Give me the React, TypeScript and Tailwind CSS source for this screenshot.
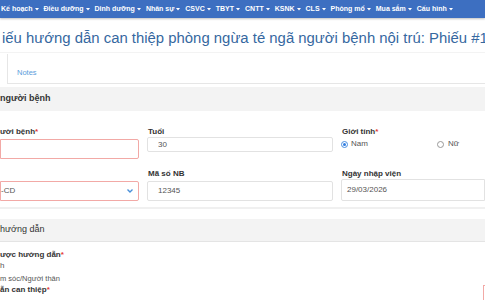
import React from "react";

const navItems = [
  "Kế hoạch",
  "Điều dưỡng",
  "Dinh dưỡng",
  "Nhân sự",
  "CSVC",
  "TBYT",
  "CNTT",
  "KSNK",
  "CLS",
  "Phòng mổ",
  "Mua sắm",
  "Cấu hình",
];

function Caret() {
  return (
    <svg width="4" height="3" viewBox="0 0 4 3" className="ml-[2px] mt-[1px]">
      <polygon points="0,0 4,0 2,2.5" fill="white" />
    </svg>
  );
}

function Star() {
  return <span className="text-[#e53935]">*</span>;
}

export default function App() {
  return (
    <div className="w-[485px] h-[300px] overflow-hidden bg-white font-['Liberation_Sans',Arial,sans-serif] text-[#333]">
      <nav className="relative z-10 h-[18px] bg-[#3d6fc1] shadow-[0_1px_2px_rgba(0,0,0,0.25)] flex items-center pl-[1px] gap-[5px] text-white font-bold text-[7px] whitespace-nowrap">
        {navItems.map((n) => (
          <div key={n} className="flex items-center">
            <span>{n}</span>
            <Caret />
          </div>
        ))}
      </nav>

      <h1 className="mt-[10px] h-[20px] leading-[20px] text-[14.9px] text-[#36689f] whitespace-nowrap pl-[2px]">
        iếu hướng dẫn can thiệp phòng ngừa té ngã người bệnh nội trú: Phiếu #1
      </h1>

      <div className="mt-[4px] border-t border-[#f3f3f3]" />

      <div className="flex items-end h-[31px] border-b border-[#e6e6e6]">
        <div className="w-[8px] h-[30px] border-r border-[#e6e6e6] bg-white -mb-px" />
        <div className="h-[21px] flex items-center pl-[9px] text-[7.5px] text-[#5b9ddb]">
          Notes
        </div>
      </div>

      {/* Card 1 */}
      <div className="mt-[3px] border-b-[2px] border-[#f0f0f0]">
        <div className="h-[24px] bg-[#f3f3f3] flex items-center text-[9px] font-bold text-[#333]">
          người bệnh
        </div>
        <div className="pt-[16px] pb-[6px] grid grid-cols-[139px_186px_1fr] gap-x-[8px] text-[8px]">
          {/* row 1 */}
          <div className="flex flex-col">
            <div className="h-[10px] leading-[10px] font-bold whitespace-nowrap">
              ười bệnh<Star />
            </div>
            <div className="mt-[2px] h-[20px] border border-[#f2a9a6] rounded-r-[2px]" />
          </div>
          <div className="flex flex-col">
            <div className="h-[10px] leading-[10px] font-bold pl-[1px]">Tuổi</div>
            <div className="h-[15px] border border-[#e2e2e2] rounded-[2px] flex items-center pl-[10px] text-[#555]">
              30
            </div>
          </div>
          <div className="flex flex-col">
            <div className="h-[10px] leading-[10px] font-bold pl-[1px] whitespace-nowrap">
              Giới tính<Star />
            </div>
            <div className="mt-[2px] h-[10px] flex items-center text-[#555]">
              <div className="flex items-center w-[96px]">
                <span className="w-[7px] h-[7px] rounded-full border border-[#4a8fe0] flex items-center justify-center mr-[3px]">
                  <span className="w-[3px] h-[3px] rounded-full bg-[#2f7de1]" />
                </span>
                Nam
              </div>
              <div className="flex items-center">
                <span className="w-[7px] h-[7px] rounded-full border border-[#999] mr-[4px]" />
                Nữ
              </div>
            </div>
          </div>

          {/* row 2 */}
          <div className="flex flex-col mt-[10px]">
            <div className="h-[10px]" />
            <div className="mt-[2px] h-[20px] border border-[#f2a9a6] rounded-r-[2px] flex items-center justify-between pr-[5px] text-[#555]">
              <span>-CD</span>
              <svg width="6" height="4" viewBox="0 0 6 4">
                <polyline points="0.5,0.5 3,3 5.5,0.5" fill="none" stroke="#4a90d9" strokeWidth="1.4" />
              </svg>
            </div>
          </div>
          <div className="flex flex-col mt-[10px]">
            <div className="h-[10px] leading-[10px] font-bold pl-[1px] whitespace-nowrap">Mã số NB</div>
            <div className="mt-[2px] h-[20px] border border-[#e2e2e2] rounded-[2px] flex items-center pl-[10px] text-[#555]">
              12345
            </div>
          </div>
          <div className="flex flex-col mt-[10px]">
            <div className="h-[10px] leading-[10px] font-bold pl-[1px] whitespace-nowrap">Ngày nhập viện</div>
            <div className="h-[22px] border border-[#e2e2e2] rounded-l-[2px] flex items-center pl-[5px] text-[#555]">
              29/03/2026
            </div>
          </div>
        </div>
      </div>

      {/* Card 2 */}
      <div className="mt-[10px]">
        <div className="h-[23px] bg-[#f3f3f3] border-b border-[#e4e4e4] flex items-center text-[9px] text-[#333]">
          hướng dẫn
        </div>
        <div className="pt-[8px] text-[8px]">
          <div className="h-[10px] leading-[10px] font-bold whitespace-nowrap">
            ược hướng dẫn<Star />
          </div>
          <div className="h-[12px] leading-[12px] text-[#555]">h</div>
          <div className="h-[13px] leading-[13px] text-[#555] text-[7.5px] whitespace-nowrap">m sóc/Người thân</div>
          <div className="flex">
            <div className="w-[484px] h-[10px] leading-[10px] font-bold whitespace-nowrap">
              ẫn can thiệp<Star />
            </div>
            <div className="w-[2px] h-[16px] border-l border-t border-[#f2a9a6]" />
          </div>
          <div className="border-t border-[#dcdcdc]" />
        </div>
      </div>
    </div>
  );
}
